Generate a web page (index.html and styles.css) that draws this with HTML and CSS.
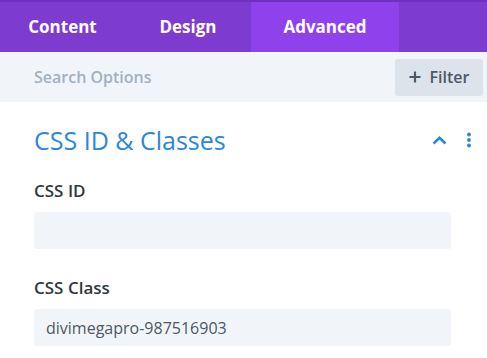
FILE: index.html
```html
<!DOCTYPE html>
<html>
<head>
<meta charset="utf-8">
<link rel="stylesheet" href="styles.css">
</head>
<body>
<div class="panel">
  <div class="tabs">
    <div class="tab tab-content">Content</div>
    <div class="tab tab-design">Design</div>
    <div class="tab tab-advanced active">Advanced</div>
  </div>
  <div class="search">
    <div class="search-text">Search Options</div>
    <div class="filter"><svg class="plus" width="12" height="12" viewBox="0 0 12 12"><path d="M6 0.5v11M0.5 6h11" stroke="#4c5866" stroke-width="2.2"/></svg><span>Filter</span></div>
  </div>
  <div class="section">
    <div class="section-head">
      <div class="section-title">CSS ID &amp; Classes</div>
      <div class="section-icons">
        <svg width="15" height="9" viewBox="0 0 15 9"><path d="M1.5 7.5L7.5 1.8l6 5.7" fill="none" stroke="#2b87da" stroke-width="2.6"/></svg>
        <svg width="6" height="16" viewBox="0 0 6 16"><circle cx="3" cy="2.5" r="1.9" fill="#2b87da"/><circle cx="3" cy="8" r="1.9" fill="#2b87da"/><circle cx="3" cy="13.5" r="1.9" fill="#2b87da"/></svg>
      </div>
    </div>
    <div class="field">
      <div class="label">CSS ID</div>
      <div class="input"></div>
    </div>
    <div class="field">
      <div class="label">CSS Class</div>
      <div class="input">divimegapro-987516903</div>
    </div>
  </div>
</div>
</body>
</html>
```
FILE: styles.css
```css
* { box-sizing: border-box; }
html, body { margin: 0; padding: 0; background: #fff; }
body { font-family: "Open Sans", sans-serif; width: 487px; height: 358px; overflow: hidden; }
.panel { width: 487px; }
.tabs { display: flex; height: 52px; background: #7e3bd0; border-top: 2px solid #6f2fc0; }
.tab { color: #fff; font-weight: 700; font-size: 17px; display: flex; align-items: center; justify-content: center; padding-bottom: 1px; }
.tab-content { width: 125px; }
.tab-design { width: 126px; }
.tab-advanced { width: 148px; }
.tab.active { background: #8f42ec; }
.search { height: 50px; background: #f1f5f9; display: flex; align-items: center; justify-content: space-between; padding: 0 4px 0 34px; }
.search-text { color: #a3b0c1; font-weight: 600; font-size: 16px; }
.filter { width: 88px; height: 37px; background: #dde3ea; border-radius: 3px; display: flex; align-items: center; justify-content: center; gap: 9px; color: #4c5866; font-weight: 600; font-size: 16px; }
.section { padding: 0 36px 0 34px; }
.section-head { display: flex; justify-content: space-between; align-items: center; height: 76px; }
.section-title { color: #2b87da; font-size: 25px; font-weight: 400; }
.section-icons { display: flex; align-items: center; gap: 19px; margin-right: -21px; }
.field { margin-bottom: 26px; }
.label { color: #32373c; font-weight: 600; font-size: 17px; height: 34px; padding-top: 1px; }
.input { height: 37px; background: #f1f5f9; border-radius: 3px; width: 417px; color: #4c5866; font-size: 16px; font-weight: 400; display: flex; align-items: center; padding-left: 12px; }
```
